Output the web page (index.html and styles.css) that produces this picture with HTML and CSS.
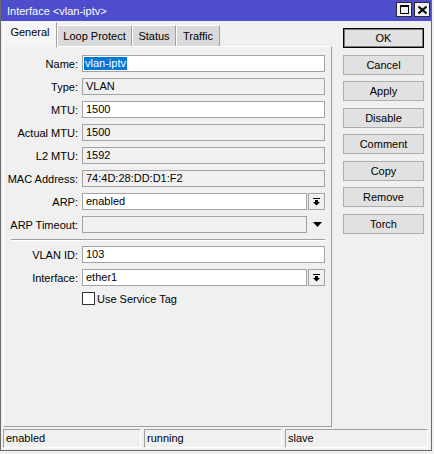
FILE: index.html
```html
<!DOCTYPE html>
<html>
<head>
<meta charset="utf-8">
<link rel="stylesheet" href="styles.css">
</head>
<body>
<div class="window">
  <div class="titlebar">
    <span class="title">Interface &lt;vlan-iptv&gt;</span>
    <div class="tb-buttons">
      <span class="tb-btn"><svg width="9" height="9" viewBox="0 0 9 9"><rect x="0.5" y="0.5" width="8" height="8" fill="none" stroke="#000"/><rect x="0" y="0" width="9" height="2" fill="#000"/></svg></span>
      <span class="tb-btn"><svg width="9" height="8" viewBox="0 0 9 8"><path d="M0.5 0.5 L8.5 7.5 M8.5 0.5 L0.5 7.5" stroke="#000" stroke-width="2"/></svg></span>
    </div>
  </div>
  <div class="content">
    <div class="main">
      <div class="tabs">
        <div class="tab active">General</div>
        <div class="tab w-loop">Loop Protect</div>
        <div class="tab w-status">Status</div>
        <div class="tab w-traffic">Traffic</div>
      </div>
      <div class="panel">
        <div class="row"><label class="lbl">Name:</label><div class="field edit"><span class="val sel">vlan-iptv</span></div></div>
        <div class="row"><label class="lbl">Type:</label><div class="field"><span class="val">VLAN</span></div></div>
        <div class="row"><label class="lbl">MTU:</label><div class="field edit"><span class="val">1500</span></div></div>
        <div class="row"><label class="lbl">Actual MTU:</label><div class="field"><span class="val">1500</span></div></div>
        <div class="row"><label class="lbl">L2 MTU:</label><div class="field"><span class="val">1592</span></div></div>
        <div class="row"><label class="lbl">MAC Address:</label><div class="field"><span class="val">74:4D:28:DD:D1:F2</span></div></div>
        <div class="row"><label class="lbl">ARP:</label><div class="field edit"><span class="val">enabled</span></div>
          <span class="ddbtn"><svg width="7" height="8" viewBox="0 0 7 8"><rect x="0" y="0" width="7" height="1" fill="#000"/><rect x="2" y="2" width="3" height="2" fill="#000"/><path d="M0 4 H7 L3.5 7.5 Z" fill="#000"/></svg></span>
        </div>
        <div class="row"><label class="lbl">ARP Timeout:</label><div class="field"><span class="val"></span></div>
          <span class="ddarrow"><svg width="9" height="5" viewBox="0 0 9 5"><path d="M0 0 H9 L4.5 5 Z" fill="#000"/></svg></span>
        </div>
        <div class="sep"></div>
        <div class="row"><label class="lbl">VLAN ID:</label><div class="field edit"><span class="val">103</span></div></div>
        <div class="row"><label class="lbl">Interface:</label><div class="field edit"><span class="val">ether1</span></div>
          <span class="ddbtn"><svg width="7" height="8" viewBox="0 0 7 8"><rect x="0" y="0" width="7" height="1" fill="#000"/><rect x="2" y="2" width="3" height="2" fill="#000"/><path d="M0 4 H7 L3.5 7.5 Z" fill="#000"/></svg></span>
        </div>
        <div class="checkrow"><span class="checkbox"></span><span class="checklbl">Use Service Tag</span></div>
      </div>
    </div>
    <div class="buttons">
      <div class="btn default">OK</div>
      <div class="btn">Cancel</div>
      <div class="btn">Apply</div>
      <div class="btn">Disable</div>
      <div class="btn">Comment</div>
      <div class="btn">Copy</div>
      <div class="btn">Remove</div>
      <div class="btn">Torch</div>
    </div>
  </div>
  <div class="statusbar">
    <div class="sb s1">enabled</div>
    <div class="sb s2">running</div>
    <div class="sb s3">slave</div>
  </div>
</div>
</body>
</html>
```
FILE: styles.css
```css
* { box-sizing: border-box; }
html, body { margin: 0; padding: 0; }
body {
  width: 434px;
  height: 454px;
  background: #f0f0f0;
  font-family: "Liberation Sans", Arial, sans-serif;
  font-size: 11px;
  color: #000;
  overflow: hidden;
}
.window {
  width: 432px;
  height: 451px;
  border-left: 1px solid #6b6b6b;
  border-right: 1px solid #6b6b6b;
  border-bottom: 1px solid #6b6b6b;
  background: #f0f0f0;
}
.titlebar {
  height: 21px;
  background: #4d4dcd;
  display: flex;
  align-items: flex-start;
  justify-content: space-between;
}
.title {
  color: #fff;
  line-height: 21px;
  padding-left: 6px;
  padding-top: 1px;
  font-size: 11px;
}
.tb-buttons {
  display: flex;
  gap: 2px;
  margin-top: 2px;
  margin-right: 1px;
}
.tb-btn {
  width: 16px;
  height: 15px;
  background: #f0f0f0;
  border: 1px solid #2a2a2a;
  display: flex;
  align-items: center;
  justify-content: center;
}
.content {
  display: flex;
  align-items: flex-start;
}
.main {
  width: 329px;
  margin-left: 2px;
}
.tabs {
  height: 25px;
  display: flex;
  align-items: flex-end;
}
.tab {
  height: 21px;
  background: #d9d9d9;
  border-top: 1px solid #fff;
  border-left: 1px solid #fff;
  border-right: 1px solid #a0a0a0;
  text-align: center;
  line-height: 20px;
  white-space: nowrap;
}
.tab.active {
  width: 54px;
  height: 25px;
  margin-bottom: -1px;
  background: #f5f5f5;
  position: relative;
  z-index: 2;
  line-height: 19px;
}
.w-loop { width: 75px; }
.w-status { width: 44px; }
.w-traffic { width: 44px; }
.panel {
  height: 381px;
  background: #f0f0f0;
  border-top: 1px solid #fff;
  border-left: 1px solid #fff;
  border-right: 1px solid #a0a0a0;
  border-bottom: 1px solid #a0a0a0;
  padding: 8px 6px 0 0;
}
.row {
  display: flex;
  align-items: center;
  height: 17px;
  margin-bottom: 6px;
}
.lbl {
  width: 74px;
  margin-right: 4px;
  text-align: right;
  white-space: nowrap;
}
.field {
  flex: 1;
  height: 17px;
  border: 1px solid #a2a2a2;
  background: #f0f0f0;
  display: flex;
  align-items: center;
  padding-left: 1px;
}
.field.edit { background: #fff; }
.val {
  display: inline-block;
  line-height: 13px;
  height: 13px;
  padding: 0 1px 0 2px;
}
.val.sel {
  background: #0078d7;
  color: #fff;
  padding: 0 1px;
}
.ddbtn {
  width: 17px;
  height: 17px;
  margin-left: 1px;
  border: 1px solid #a2a2a2;
  background: #f0f0f0;
  display: flex;
  align-items: center;
  justify-content: center;
}
.ddarrow {
  width: 18px;
  height: 17px;
  display: flex;
  align-items: center;
  padding-left: 6px;
}
.sep {
  margin: 1px 0 5px 7px;
  height: 2px;
  border-top: 1px solid #a0a0a0;
  border-bottom: 1px solid #fff;
}
.checkrow {
  display: flex;
  align-items: center;
  margin-top: 4px;
  padding-left: 78px;
  height: 13px;
}
.checkbox {
  width: 13px;
  height: 13px;
  border: 1px solid #333;
  background: #fff;
}
.checklbl {
  margin-left: 2px;
}
.buttons {
  width: 81px;
  margin-left: 11px;
  margin-top: 7px;
  display: flex;
  flex-direction: column;
  gap: 6.5px;
}
.btn {
  height: 20px;
  background: #e1e1e1;
  border: 1px solid #adadad;
  text-align: center;
  line-height: 18px;
}
.btn.default {
  border: 1px solid #000;
  box-shadow: inset 0 0 0 1px #7a7a7a;
}
.statusbar {
  display: flex;
  gap: 3px;
  margin-top: 2px;
  margin-left: 2px;
}
.sb {
  height: 19px;
  border-top: 1px solid #a0a0a0;
  border-left: 1px solid #a0a0a0;
  border-bottom: 1px solid #fff;
  border-right: 1px solid #fff;
  padding-left: 2px;
  line-height: 17px;
}
.s1 { width: 138px; }
.s2 { width: 138px; }
.s3 { width: 143px; }
```
